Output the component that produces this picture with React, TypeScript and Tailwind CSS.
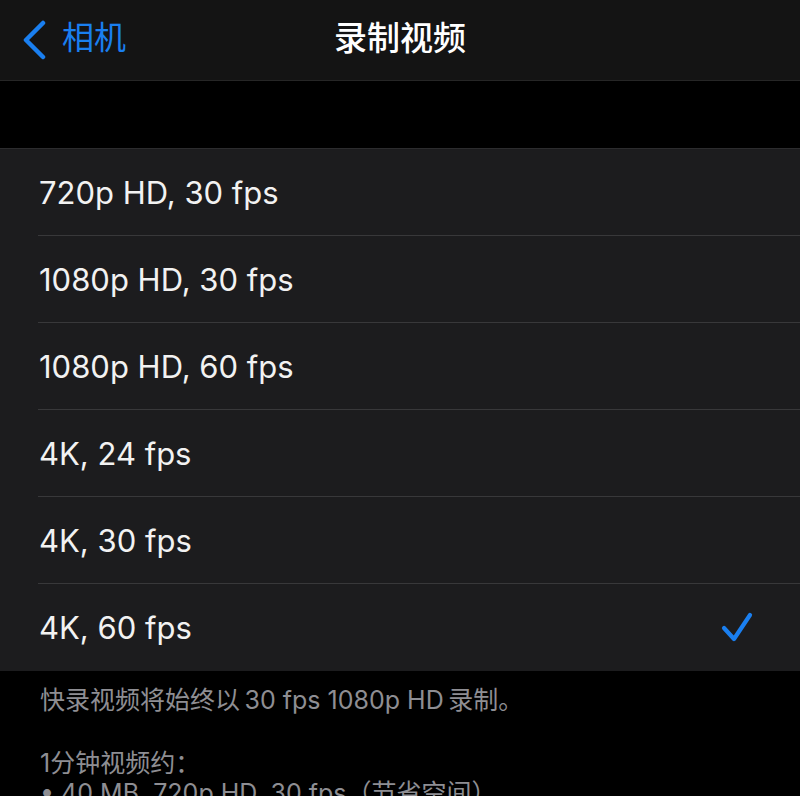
const OPTIONS = [
  '720p HD, 30 fps',
  '1080p HD, 30 fps',
  '1080p HD, 60 fps',
  '4K, 24 fps',
  '4K, 30 fps',
  '4K, 60 fps',
]

const SELECTED = '4K, 60 fps'

function BackChevron() {
  return (
    <svg width="26" height="40" viewBox="0 0 26 40" fill="none" className="shrink-0">
      <polyline
        points="21,3 4,20 21,37"
        stroke="currentColor"
        strokeWidth="4.5"
        strokeLinecap="round"
        strokeLinejoin="round"
      />
    </svg>
  )
}

function Checkmark() {
  return (
    <svg width="34" height="34" viewBox="0 0 34 34" fill="none" className="shrink-0">
      <polyline
        points="4,17 14,28 30,4"
        stroke="currentColor"
        strokeWidth="4.2"
        strokeLinecap="round"
        strokeLinejoin="round"
      />
    </svg>
  )
}

export default function App() {
  return (
    <div
      className="w-[800px] h-[796px] overflow-hidden bg-black text-white"
      style={{ fontFamily: 'Inter, "Noto Sans CJK SC", sans-serif' }}
    >
      {/* Nav bar */}
      <div className="relative h-[81px] bg-[#141414] border-b border-[#262626] flex items-center">
        <div className="flex items-center pl-[22px] text-[#1a7ff0]">
          <BackChevron />
          <span className="text-[32px] leading-none ml-[14px] -mt-[4px]">相机</span>
        </div>
        <div className="absolute inset-0 flex items-center justify-center pointer-events-none">
          <span className="text-[33px] font-medium leading-none -mt-[4px]">录制视频</span>
        </div>
      </div>

      {/* Gap */}
      <div className="h-[67px]" />

      {/* Options list */}
      <div className="bg-[#1c1c1e] border-t border-[#2c2c2e]">
        {OPTIONS.map((opt, i) => (
          <div key={opt} className="pl-[38px]">
            <div
              className={
                'h-[87px] flex items-center pr-[46px] ' +
                (i < OPTIONS.length - 1 ? 'border-b border-[#38383a]' : '')
              }
            >
              <span className="text-[31px] leading-none pl-[1px] text-[#f2f2f2]">{opt}</span>
              {opt === SELECTED && (
                <span className="ml-auto text-[#1a7ff0]">
                  <Checkmark />
                </span>
              )}
            </div>
          </div>
        ))}
      </div>

      {/* Footer */}
      <div className="pl-[40px] pt-[14px] text-[25px] leading-[30px] text-[#8e8e93]">
        <p>快录视频将始终以{'\u2009'}30 fps 1080p HD{'\u2009'}录制。</p>
        <p className="mt-[33px]">1分钟视频约：</p>
        <p>• 40 MB, 720p HD, 30 fps（节省空间）</p>
      </div>
    </div>
  )
}
